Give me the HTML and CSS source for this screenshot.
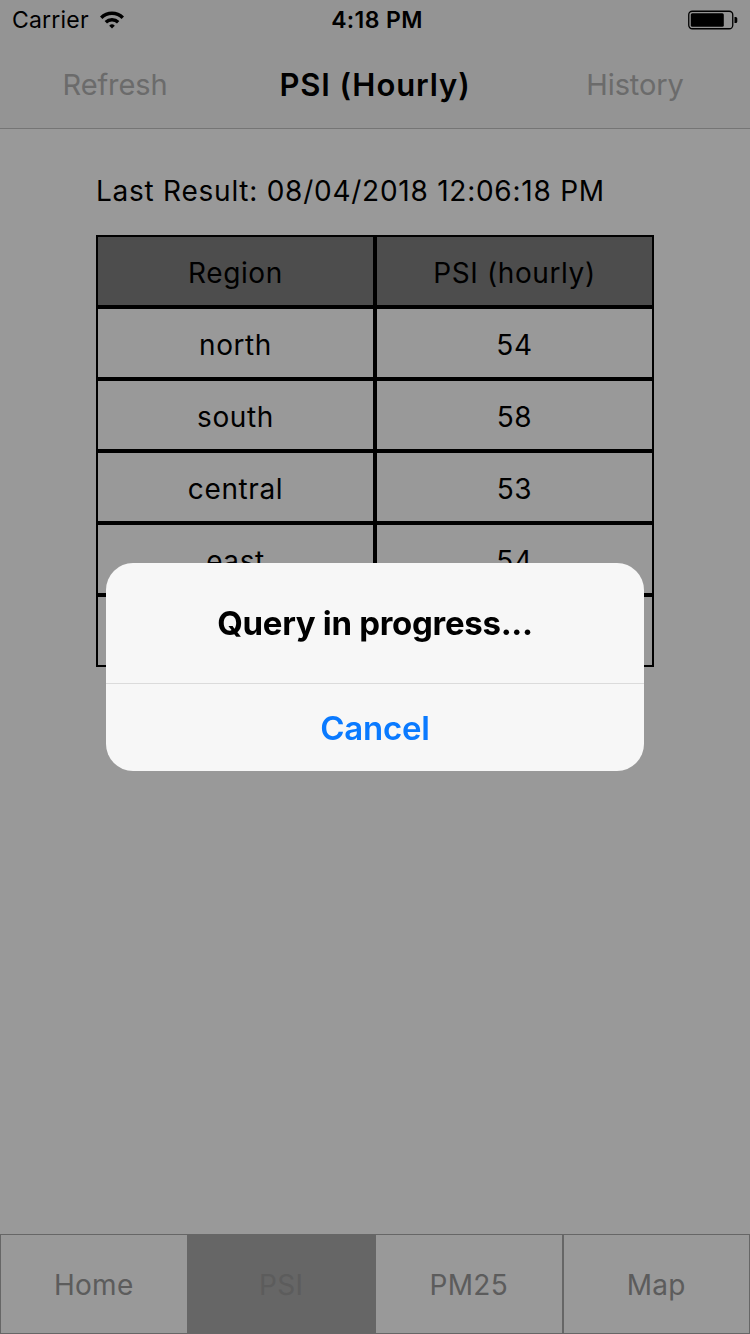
FILE: index.html
```html
<!DOCTYPE html>
<html>
<head>
<meta charset="utf-8">
<link rel="stylesheet" href="styles.css">
</head>
<body>
<div class="screen">
  <div class="status">
    <div class="status-left">
      <span class="carrier">Carrier</span>
      <svg class="wifi" width="26" height="19" viewBox="0 0 26 19">
        <path d="M1 6.5 A17 17 0 0 1 25 6.5 L22.6 8.9 A13.6 13.6 0 0 0 3.4 8.9 Z" fill="#000"/>
        <path d="M5.6 11.1 A10.5 10.5 0 0 1 20.4 11.1 L18 13.5 A7.1 7.1 0 0 0 8 13.5 Z" fill="#000"/>
        <path d="M10.2 15.7 A4 4 0 0 1 15.8 15.7 L13 18.5 Z" fill="#000"/>
      </svg>
    </div>
    <div class="time">4:18 PM</div>
    <div class="status-right">
      <svg class="battery" width="52" height="20" viewBox="0 0 52 20">
        <rect x="0.75" y="1.25" width="44" height="17.5" rx="3.5" ry="3.5" fill="none" stroke="#000" stroke-width="1.3"/>
        <rect x="2.8" y="3.2" width="33" height="13.6" rx="1.5" fill="#000"/>
        <path d="M46.5 7 h1.2 a1.6 1.6 0 0 1 1.6 1.6 v2.8 a1.6 1.6 0 0 1 -1.6 1.6 h-1.2 z" fill="#000"/>
      </svg>
    </div>
  </div>
  <div class="navbar">
    <div class="nav-btn">Refresh</div>
    <div class="nav-title">PSI (Hourly)</div>
    <div class="nav-btn">History</div>
  </div>
  <main class="content">
    <div class="last-result">Last Result: 08/04/2018 12:06:18 PM</div>
    <div class="table">
      <div class="cell head">Region</div>
      <div class="cell head">PSI (hourly)</div>
      <div class="cell">north</div>
      <div class="cell">54</div>
      <div class="cell">south</div>
      <div class="cell">58</div>
      <div class="cell">central</div>
      <div class="cell">53</div>
      <div class="cell">east</div>
      <div class="cell">54</div>
      <div class="cell">national</div>
      <div class="cell">58</div>
    </div>
  </main>
  <nav class="tabbar">
    <div class="tab">Home</div>
    <div class="tab active">PSI</div>
    <div class="tab">PM25</div>
    <div class="tab">Map</div>
  </nav>
</div>
<div class="dim"></div>
<div class="alert">
  <div class="alert-title">Query in progress...</div>
  <div class="alert-btn">Cancel</div>
</div>
</body>
</html>
```
FILE: styles.css
```css
* { box-sizing: border-box; }
html, body { margin: 0; padding: 0; }
body {
  width: 750px;
  height: 1334px;
  overflow: hidden;
  font-family: "Inter", "Roboto", "Liberation Sans", sans-serif;
  color: #000;
  background: #fff;
}
.screen {
  width: 750px;
  height: 1334px;
  display: flex;
  flex-direction: column;
}
.status {
  height: 40px;
  background: #f7f7f7;
  display: grid;
  grid-template-columns: 1fr auto 1fr;
  align-items: center;
  padding: 0 8px 0 12px;
}
.status-left { display: flex; align-items: center; gap: 10px; }
.carrier { font-size: 23px; letter-spacing: 0.2px; }
.wifi { margin-top: -1px; }
.time { font-size: 23px; font-weight: 600; letter-spacing: 0.4px; }
.status-right { display: flex; justify-content: flex-end; }
.battery { display: block; margin-right: 2px; }
.navbar {
  height: 89px;
  background: #f7f7f7;
  border-bottom: 1px solid #c4c4c4;
  display: grid;
  grid-template-columns: 230px 1fr 230px;
  align-items: center;
}
.nav-btn {
  text-align: center;
  font-size: 29px;
  color: #b2b2b2;
  letter-spacing: -0.1px;
}
.nav-title {
  text-align: center;
  font-size: 31px;
  font-weight: 600;
  letter-spacing: 0.9px;
}
.content {
  flex: 1;
  padding: 45px 0 0 96px;
}
.last-result {
  font-size: 28px;
  line-height: 34px;
  letter-spacing: 0.75px;
  margin-bottom: 27px;
}
.table {
  display: grid;
  grid-template-columns: 279px 279px;
  grid-auto-rows: 72px;
}
.cell {
  border: 2px solid #000;
  display: flex;
  align-items: center;
  justify-content: center;
  font-size: 28px;
  letter-spacing: 0.6px;
  padding-top: 3px;
}
.cell.head { background: #808080; }
.tabbar {
  height: 100px;
  display: grid;
  grid-template-columns: repeat(4, 1fr);
}
.tab {
  border: 1px solid #aaa;
  display: flex;
  align-items: center;
  justify-content: center;
  font-size: 28px;
  color: #999;
  letter-spacing: 0.3px;
  padding-top: 2px;
}
.tab.active { background: #aaa; }
.dim {
  position: fixed;
  inset: 0;
  background: rgba(0, 0, 0, 0.4);
}
.alert {
  position: fixed;
  left: 106px;
  top: 563px;
  width: 538px;
  height: 208px;
  border-radius: 27px;
  background: #f7f7f7;
  display: flex;
  flex-direction: column;
  overflow: hidden;
}
.alert-title {
  height: 121px;
  border-bottom: 1px solid #dbdbdb;
  display: flex;
  align-items: center;
  justify-content: center;
  font-size: 33px;
  font-weight: 700;
  letter-spacing: -0.3px;
}
.alert-btn {
  flex: 1;
  display: flex;
  align-items: center;
  justify-content: center;
  font-size: 33px;
  font-weight: 600;
  color: #0a7aff;
  letter-spacing: -0.2px;
}
```
